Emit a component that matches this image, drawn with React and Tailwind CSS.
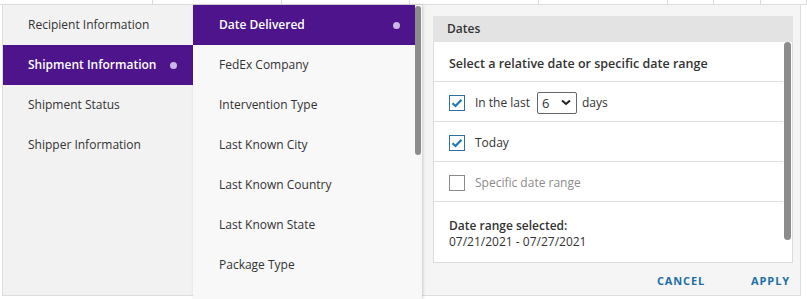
import React from "react";

const font = { fontFamily: '"Open Sans", "Noto Sans", sans-serif' };

function Check({ checked }) {
  return checked ? (
    <div className="w-[16px] h-[16px] border border-[#2f6f99] bg-white flex items-center justify-center shrink-0">
      <svg width="12" height="10" viewBox="0 0 12 10">
        <path d="M1.5 5.2 L4.5 8 L10.5 1.8" fill="none" stroke="#1f78b4" strokeWidth="2.2" />
      </svg>
    </div>
  ) : (
    <div className="w-[16px] h-[16px] border border-[#8a8a8a] bg-white shrink-0" />
  );
}

export default function App() {
  const left = ["Recipient Information", "Shipment Information", "Shipment Status", "Shipper Information"];
  const mid = [
    "Date Delivered",
    "FedEx Company",
    "Intervention Type",
    "Last Known City",
    "Last Known Country",
    "Last Known State",
    "Package Type",
  ];
  const cols = [153, 129, 128, 129, 129, 46, 47, 46];
  return (
    <div className="w-[807px] h-[299px] bg-white overflow-hidden text-[#333] text-[12px]" style={font}>
      <div className="h-[5px] flex border-b border-[#dcdcdc]">
        {cols.map((w, i) => (
          <div key={i} className="h-full border-r border-[#dcdcdc]" style={{ width: w }} />
        ))}
      </div>
      <div className="ml-[2px] w-[799px] h-[291px] border border-[#dedede] border-t-0 flex">
        <div className="w-[190px] bg-[#f2f2f2] flex flex-col">
          {left.map((t, i) => (
            <div
              key={t}
              className={
                "h-[40px] shrink-0 flex items-center pl-[25px] pr-[16px] justify-between " +
                (i === 1 ? "bg-[#4d148c] text-white font-semibold" : "")
              }
            >
              <span>{t}</span>
              {i === 1 && <span className="w-[7px] h-[7px] rounded-full bg-[#c9b8e3]" />}
            </div>
          ))}
        </div>
        <div className="w-[229px] h-[294px] bg-[#f8f8f8] flex shadow-[1px_0_3px_rgba(0,0,0,0.18)] relative z-10">
          <div className="flex-1 flex flex-col">
            {mid.map((t, i) => (
              <div
                key={t}
                className={
                  "h-[40px] shrink-0 flex items-center pl-[26px] pr-[15px] justify-between " +
                  (i === 0 ? "bg-[#4d148c] text-white font-semibold" : "")
                }
              >
                <span>{t}</span>
                {i === 0 && <span className="w-[7px] h-[7px] rounded-full bg-[#c9b8e3]" />}
              </div>
            ))}
          </div>
          <div className="w-[7px] pt-[1px]">
            <div className="w-[6px] h-[149px] rounded-full bg-[#8c8c8c]" />
          </div>
        </div>
        <div className="flex-1 bg-[#f5f5f5] pl-[11px] pr-[7px] pt-[11px] flex flex-col">
          <div className="h-[26px] shrink-0 bg-[#e3e3e3] flex items-center pl-[14px] font-semibold text-[#333]">Dates</div>
          <div className="h-[221px] shrink-0 bg-white border border-[#dcdcdc] border-t-0 flex">
            <div className="flex-1 flex flex-col">
              <div className="h-[40px] shrink-0 flex items-center pl-[15px] pt-[5px] font-semibold text-[12.5px] border-b border-[#e0e0e0]">
                Select a relative date or specific date range
              </div>
              <div className="h-[40px] shrink-0 flex items-center pl-[15px] pt-[2px] border-b border-[#e0e0e0]">
                <Check checked />
                <span className="ml-[10px]">In the last</span>
                <div className="ml-[7px] w-[40px] h-[22px] border border-[#666] rounded-[2px] flex items-center justify-between pl-[4px] pr-[5px] text-[13px]">
                  <span className="mt-[2px]">6</span>
                  <svg width="10" height="7" viewBox="0 0 10 7">
                    <path d="M1 1.5 L5 5 L9 1.5" fill="none" stroke="#222" strokeWidth="2" />
                  </svg>
                </div>
                <span className="ml-[5px]">days</span>
              </div>
              <div className="h-[40px] shrink-0 flex items-center pl-[15px] pt-[2px] border-b border-[#e0e0e0]">
                <Check checked />
                <span className="ml-[10px]">Today</span>
              </div>
              <div className="h-[40px] shrink-0 flex items-center pl-[15px] pt-[2px] border-b border-[#e0e0e0]">
                <Check />
                <span className="ml-[10px] text-[#8c8c8c]">Specific date range</span>
              </div>
              <div className="pl-[15px] pt-[16px] leading-[16px]">
                <div className="font-semibold">Date range selected:</div>
                <div>07/21/2021 - 07/27/2021</div>
              </div>
            </div>
            <div className="w-[9px] pr-[1px] flex justify-end">
              <div className="w-[7px] h-[198px] rounded-full bg-[#8c8c8c]" />
            </div>
          </div>
          <div className="flex justify-end items-start pt-[10px] pr-[3px] gap-[46px] text-[11px] font-bold tracking-[0.08em] text-[#1f6fa8]">
            <span>CANCEL</span>
            <span>APPLY</span>
          </div>
        </div>
      </div>
    </div>
  );
}
